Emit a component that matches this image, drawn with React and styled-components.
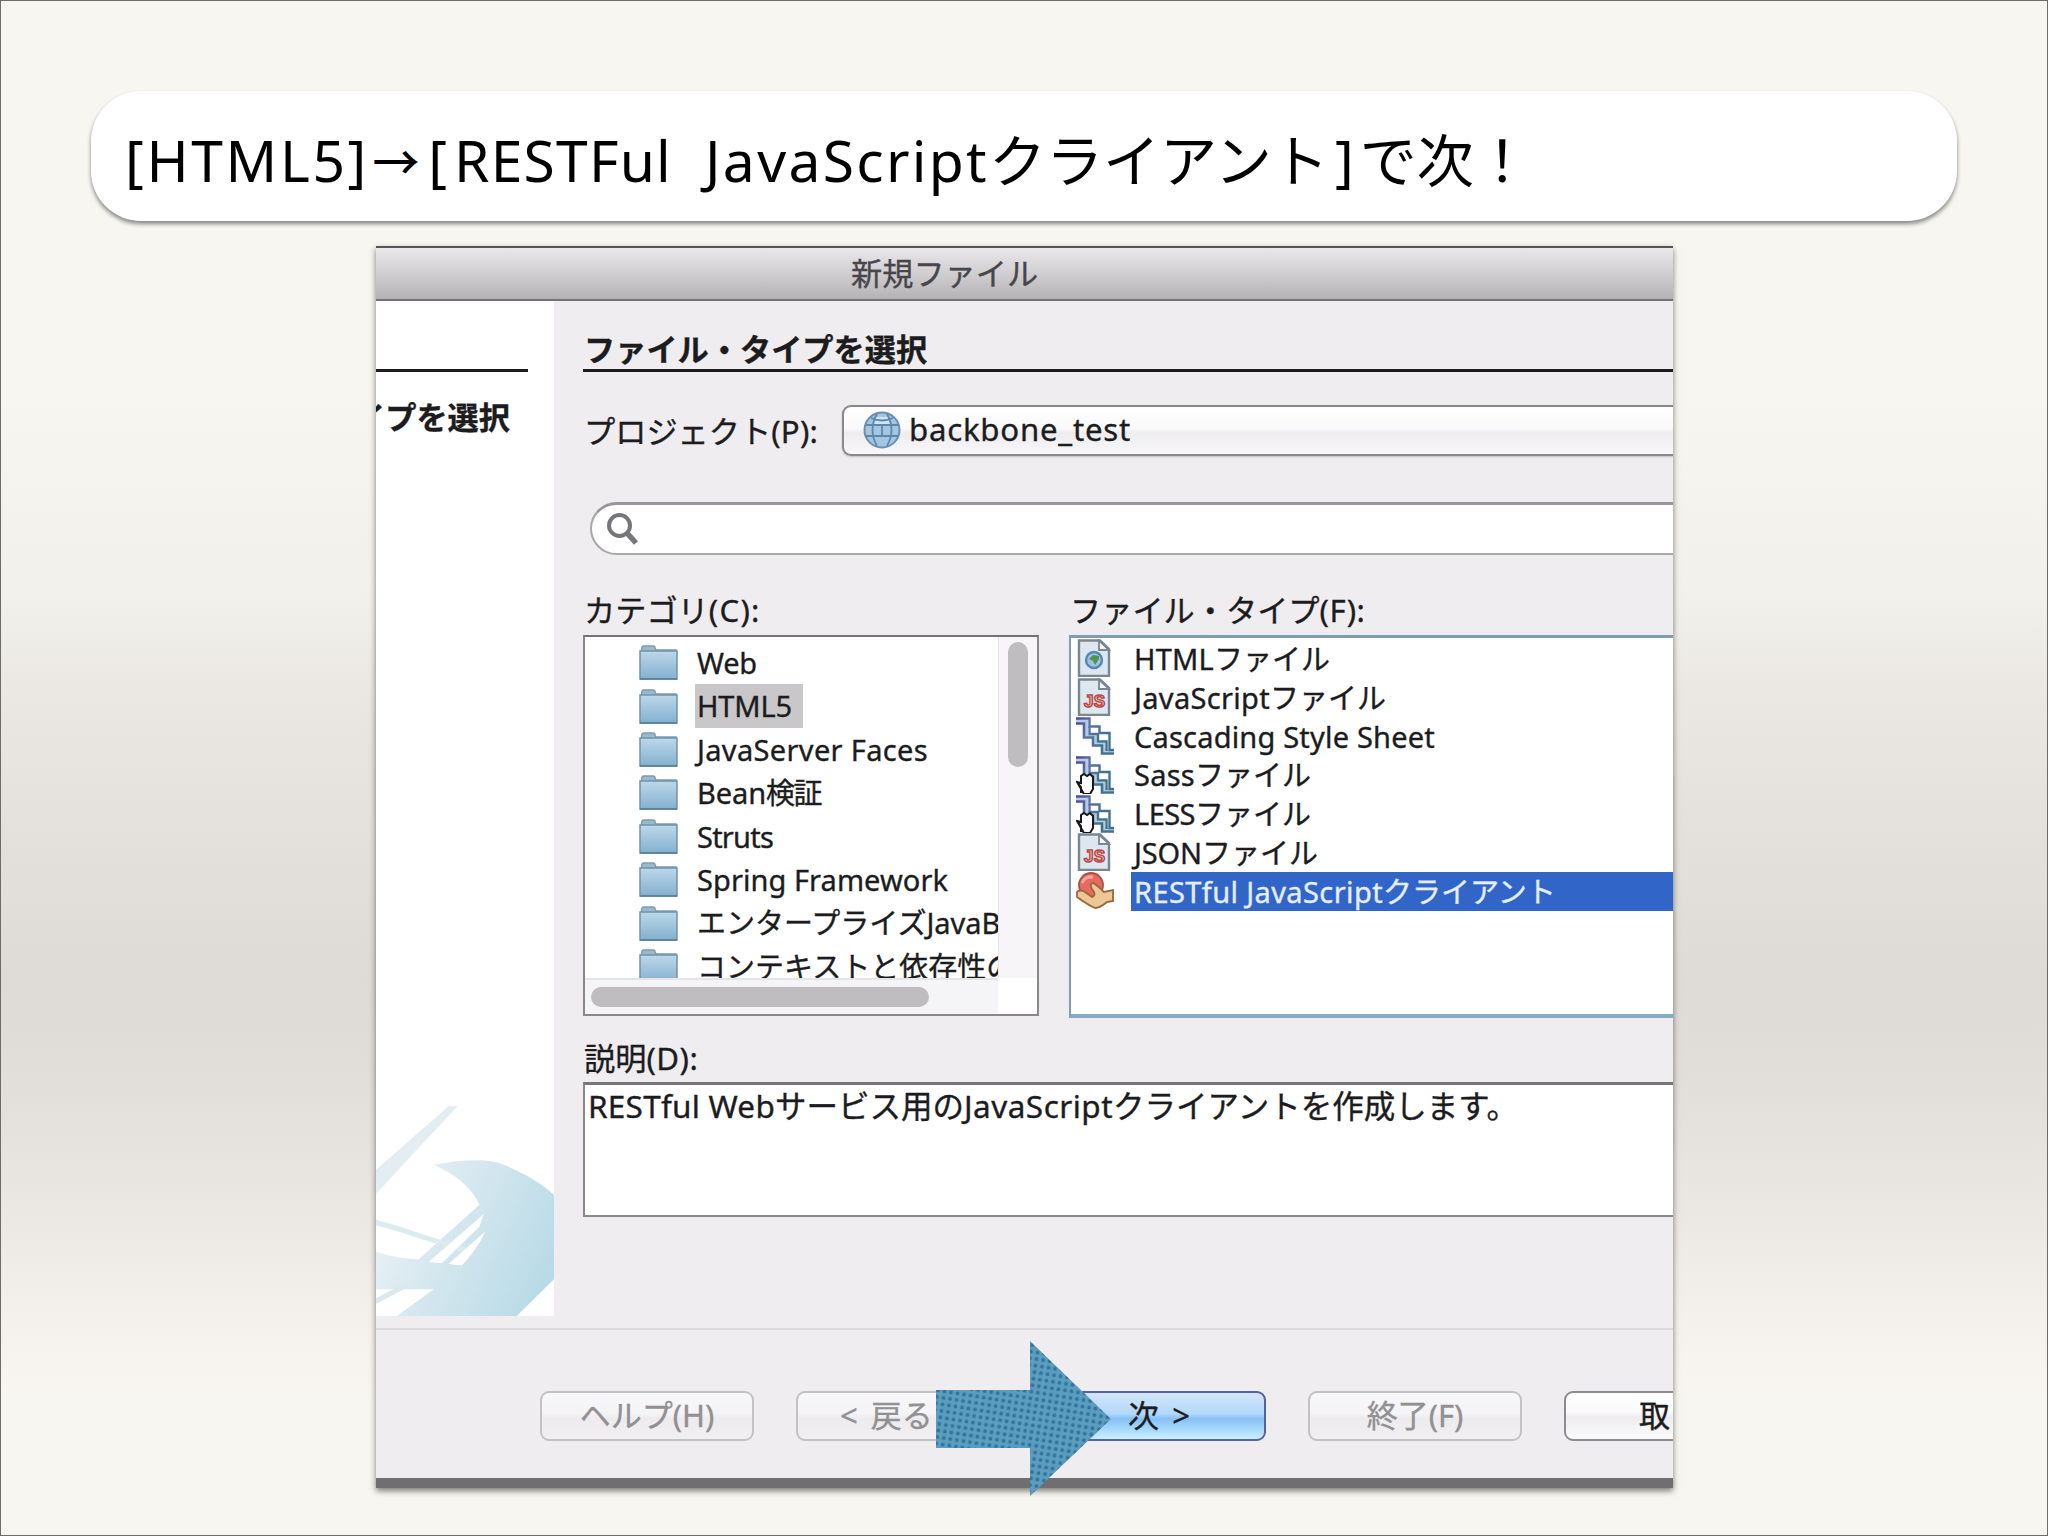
import React, { useLayoutEffect, useRef, useState } from "react"
import styled, { createGlobalStyle } from "styled-components"

const GlobalStyle = createGlobalStyle`
  * {
    box-sizing: border-box;
  }
  body {
    margin: 0px;
    font-family: "Noto Sans", "Noto Sans CJK JP", sans-serif;
    color: #1c1c1e;
  }
`

const Slide = styled.div`
  width: 2048px;
  height: 1536px;
  border: 1px solid #6c6c6a;
  padding: 90px 90px 0px 90px;
  overflow: hidden;
  background: linear-gradient(
    #f7f6f0 0px,
    #f7f6f0 380px,
    #f1f0ea 600px,
    #eae7e2 700px,
    #e2dfda 880px,
    #dedbd6 980px,
    #e1deda 1070px,
    #eae7e3 1200px,
    #f5f2ed 1330px,
    #f8f6f0 1400px,
    #f8f6f0 1536px
  );
`

const TitleCard = styled.h1`
  display: flex;
  align-items: center;
  height: 130px;
  margin: 0px;
  padding: 7px 0px 0px 34px;
  border-radius: 50px;
  background: white;
  color: #000;
  font-size: 57px;
  font-weight: 400;
  line-height: 80px;
  box-shadow: 0px 3px 4px rgba(0, 0, 0, 0.45);
`

const RunText = styled.span`
  display: inline-block;
  white-space: pre;
`

const TitleArrow = styled.span`
  width: 54px;
  font-family: "Noto Sans CJK JP", sans-serif;
  font-size: 47px;
  font-weight: 500;
  text-align: center;
`

const TitleBracket = styled.span`
  width: 31px;
  text-align: right;
  padding-right: ${props => props.$after || 0}px;
`

const Dialog = styled.section`
  display: flex;
  flex-direction: column;
  position: relative;
  width: 1297px;
  height: 1242px;
  margin: 25px 0px 0px 285px;
  border-top: 2px solid #565456;
  border-bottom: 10px solid #706e70;
  background: #efedef;
  font-size: 31.2px;
  line-height: 37px;
  box-shadow: 0px 3px 6px rgba(0, 0, 0, 0.5);
  -webkit-text-stroke: 0.35px currentColor;
`

const TitleBar = styled.header`
  height: 53px;
  padding: 7px 0px 0px 475px;
  border-bottom: 2px solid #737173;
  background: linear-gradient(#e9e7e9, #d0ced0 50%, #b4b2b4);
  color: #48464a;
`

const Body = styled.div`
  display: flex;
  height: 1027px;
`

const Sidebar = styled.aside`
  display: flex;
  flex-direction: column;
  width: 178px;
  height: 1015px;
  background: white;
  overflow: hidden;
`

const StepRule = styled.div`
  width: 152px;
  height: 71px;
  border-bottom: 3px solid #1d1b1d;
`

const Step = styled.div`
  margin: 27px 0px 0px -22px;
  font-weight: 700;
  white-space: nowrap;
`

const Artwork = styled.svg`
  display: block;
  width: 178px;
  height: 213px;
  margin-top: auto;
`

const Main = styled.main`
  flex: 1;
  min-width: 0px;
  padding-left: 29px;
  overflow: hidden;
`

const Heading = styled.h2`
  height: 71px;
  margin: 0px;
  padding: 30px 0px 0px 1px;
  border-bottom: 3px solid #1d1b1d;
  font-size: 31.2px;
  font-weight: 700;
  line-height: 37px;
`

const ProjectRow = styled.div`
  display: flex;
  align-items: center;
  margin-top: 33px;
`

const ProjectLabel = styled.label`
  width: 259px;
  padding: 1px 0px 0px 1px;
  white-space: nowrap;
`

const Dropdown = styled.div`
  display: flex;
  flex: 1;
  align-items: center;
  gap: 8px;
  height: 51px;
  padding: 0px 0px 2px 19px;
  border: 2px solid #8a888b;
  border-right: 0px;
  border-radius: 9px 0px 0px 9px;
  background: linear-gradient(#fff, #fbfafb 45%, #eeecef 55%, #f8f7f8);
  box-shadow: 0px 1px 2px rgba(0, 0, 0, 0.2);
`

const SearchField = styled.div`
  display: flex;
  align-items: center;
  height: 53px;
  margin: 46px 0px 0px 7px;
  padding-left: 13px;
  border: 2px solid #a9a7aa;
  border-top: 3px solid #98969a;
  border-right: 0px;
  border-radius: 27px 0px 0px 27px;
  background: white;
`

const Lists = styled.div`
  display: flex;
  gap: 30px;
  height: 427px;
  margin-top: 37px;
`

const ListColumn = styled.div`
  width: ${props => (props.$wide ? "auto" : "456px")};
  flex: ${props => (props.$wide ? 1 : "none")};
  min-width: 0px;
`

const FieldLabel = styled.div`
  padding-left: 1px;
  margin-bottom: ${props => props.$gap || 6}px;
  white-space: nowrap;
`

const CategoryBox = styled.div`
  display: grid;
  grid-template-columns: 1fr 39px;
  grid-template-rows: 1fr 36px;
  height: 381px;
  border: 2px solid #8a888b;
  border-top-color: #737174;
  background: white;
  font-size: 29px;
`

const CategoryList = styled.div`
  min-width: 0px;
  padding-top: 4px;
  overflow: hidden;
`

const CategoryRow = styled.div`
  display: flex;
  align-items: center;
  height: 43.4px;
  padding-left: 54px;
  gap: 17px;
  white-space: nowrap;
`

const FolderImage = styled.svg`
  flex: none;
  width: 39px;
  height: 35px;
`

const CategoryName = styled.span`
  flex: none;
  height: 43.4px;
  padding: 0px 11px 0px 2px;
  line-height: 43px;
  background: ${props => (props.$selected ? "#c9c7ca" : "transparent")};
`

const VerticalTrack = styled.div`
  padding: 5px 9px;
  border-left: 1px solid #e6e4e7;
  background: #f7f5f8;
`

const HorizontalTrack = styled.div`
  padding: 7px 6px;
  border-top: 2px solid #e6e4e7;
  background: #f5f4f6;
`

const Thumb = styled.div`
  width: ${props => props.$width}px;
  height: ${props => props.$height}px;
  border-radius: 10px;
  background: #bfbdc0;
`

const FileBox = styled.div`
  height: 383px;
  padding-top: 1px;
  border: 2px solid #7f9cb2;
  border-top-width: 3px;
  border-bottom: 4px solid #85abcb;
  border-right: 0px;
  background: white;
  font-size: 29px;
`

const FileRow = styled.div`
  display: flex;
  align-items: center;
  height: 38.8px;
  padding-left: 5px;
  gap: 17px;
  white-space: nowrap;
`

const FileName = styled.span`
  flex: 1;
  height: 38.8px;
  padding-left: 3px;
  line-height: 40px;
  color: ${props => (props.$selected ? "#e6edfb" : "inherit")};
  background: ${props => (props.$selected ? "#3166c8" : "transparent")};
`

const Description = styled.div`
  margin-top: 21px;
`

const DescriptionBox = styled.div`
  height: 135px;
  padding: 2px 0px 0px 3px;
  border: 2px solid #8a888b;
  border-top: 3px solid #777578;
  border-right: 0px;
  background: white;
  font-size: 31.5px;
  white-space: nowrap;
`

const Footer = styled.footer`
  display: flex;
  flex: 1;
  gap: 42px;
  padding: 61px 0px 0px 164px;
  border-top: 2px solid #dcdadc;
  overflow: hidden;
`

const buttonTones = {
  disabled: ["#c3c1c4", "#919093", "linear-gradient(#f8f7f9, #f4f3f5 45%, #edebee 55%, #f1eff2)"],
  normal: ["#8d8b8f", "#1c1c1e", "linear-gradient(#fff, #fcfbfc 40%, #eeecef 52%, #fbfafb)"],
  primary: ["#5663a0", "#1c1c1e", "linear-gradient(#d3e6fb, #b3d8fb 45%, #86c0f3 56%, #a9dafc 80%, #c9f0fe)"],
}

const Button = styled.button`
  flex: none;
  width: 214px;
  height: 50px;
  padding: 0px 0px 2px ${props => props.$indent || 0}px;
  border: 2px solid ${props => buttonTones[props.$tone][0]};
  border-radius: 9px;
  background: ${props => buttonTones[props.$tone][2]};
  color: ${props => buttonTones[props.$tone][1]};
  font-family: inherit;
  font-size: 31px;
  line-height: 37px;
  text-align: ${props => (props.$indent ? "left" : "center")};
  white-space: pre;
  word-spacing: 5px;
`

const Arrow = styled.svg`
  position: absolute;
  left: 560px;
  top: 1092px;
  width: 176px;
  height: 158px;
`

// Spreads a run of text over a fixed width by adjusting its letter spacing
const Run = ({ w, children }) => {
  const ref = useRef(null)
  const [spacing, setSpacing] = useState(0)
  useLayoutEffect(() => {
    const natural = ref.current.getBoundingClientRect().width
    setSpacing((w - natural) / children.length)
  }, [])
  return (
    <RunText ref={ref} style={{ letterSpacing: spacing }}>
      {children}
    </RunText>
  )
}

const Mixed = ({ parts }) =>
  parts.map((part, index) =>
    Array.isArray(part) ? (
      <Run key={index} w={part[1]}>
        {part[0]}
      </Run>
    ) : (
      <React.Fragment key={index}>{part}</React.Fragment>
    )
  )

const FolderIcon = () => (
  <FolderImage viewBox="0 0 39 35">
    <defs>
      <linearGradient id="folder" x1="0" y1="0" x2="0" y2="1">
        <stop offset="0" stopColor="#bdd8ea" />
        <stop offset="1" stopColor="#83b0cf" />
      </linearGradient>
    </defs>
    <path d="M2 8 L3 2 Q3.500 1 5 1 H14 Q16 1 16 3 L17 5 H37 V12 H2 Z" fill="#9bb9cc" stroke="#7f9caf" strokeWidth="1.500" />
    <rect x="1" y="6" width="37" height="28" fill="url(#folder)" stroke="#6f94ac" strokeWidth="1.500" />
    <path d="M1 34 H38" stroke="#567b93" strokeWidth="1.500" />
  </FolderImage>
)

const GlobeIcon = () => (
  <svg width="38" height="38" viewBox="0 0 38 38">
    <circle cx="19" cy="19" r="17.500" fill="#a3c6e2" stroke="#6b8fae" strokeWidth="2" />
    <path d="M12 6 H26 L28 15 H10 Z" fill="#cfe4f4" />
    <g fill="none" stroke="#5f87a9" strokeWidth="1.800">
      <path d="M14 3 Q5 19 14 35 M24 3 Q33 19 24 35" />
      <path d="M3 14 H35 M3 25 H35 M19 14 V25 M8 7 Q19 12 30 7" />
    </g>
  </svg>
)

const SearchIcon = () => (
  <svg width="38" height="36" viewBox="0 0 38 36">
    <circle cx="14.500" cy="14.500" r="10.500" fill="none" stroke="#77757a" strokeWidth="4" />
    <path d="M22 22 L31 32" stroke="#77757a" strokeWidth="5.500" />
  </svg>
)

const Page = () => (
  <>
    <path d="M3 1.500 H24 L33 10 V37 H3 Z" fill="#dce7ef" stroke="#7b8790" strokeWidth="2.400" />
    <path d="M23 1.500 V11 H33 Z" fill="#f8fafc" stroke="#7b8790" strokeWidth="1.800" />
  </>
)

const Stairs = () => (
  <>
    <defs>
      <linearGradient id="stairs" gradientUnits="userSpaceOnUse" x1="0" y1="0" x2="30" y2="10">
        <stop offset="0" stopColor="#4c3f95" />
        <stop offset="0.500" stopColor="#5f74a6" />
        <stop offset="1" stopColor="#43718c" />
      </linearGradient>
    </defs>
    <g fill="none">
      <path d="M0 4 H10.500 V19.500 H19.500 V27.500 H27.500 V34 H38" stroke="#b4cde2" strokeWidth="3" />
      <path d="M0 1.500 H13.500 V9.500 H23.500 V16 H33.500 V33 H38" stroke="url(#stairs)" strokeWidth="2.400" />
      <path d="M0 6.500 H8 V20.500 H17 V28.500 H26 V36.500 H38" stroke="url(#stairs)" strokeWidth="2.600" />
      <path d="M13.500 9.500 V17 H22 V24.500 H30.500 V34" stroke="url(#stairs)" strokeWidth="2.400" />
    </g>
  </>
)

const fileIcons = {
  html: (
    <>
      <Page />
      <circle cx="18" cy="21" r="8" fill="#9fc2e2" stroke="#5588b5" strokeWidth="2.400" />
      <path d="M13 20 L17 16 L23 17 L23 20 L19 26 L17 22 Z" fill="#4f9448" />
    </>
  ),
  js: (
    <>
      <Page />
      <text
        x="8"
        y="29"
        fontFamily="Liberation Sans"
        fontWeight="700"
        fontSize="17"
        textLength="21"
        fill="#f3e3e2"
        stroke="#bb4745"
        strokeWidth="1.500"
      >
        JS
      </text>
    </>
  ),
  css: <Stairs />,
  pre: (
    <>
      <Stairs />
      <path
        d="M5 37 V31 L1 26 M1 26 L5 27 V20 L8 18 L11 20 L14 18 L17 21 V33 L14 38 H8 Z"
        fill="white"
        stroke="#17181c"
        strokeWidth="2"
      />
    </>
  ),
  rest: (
    <>
      <circle cx="15" cy="13" r="12" fill="#e9695f" stroke="#a95146" strokeWidth="1.800" />
      <path d="M6 11 Q9 4 17 5" stroke="#f7a79d" strokeWidth="3" fill="none" />
      <path
        d="M1 20 Q4 17 9 20 L16 25 Q21 23 16 17 Q13 12 17 11 Q21 13 28 20 L37 18 V29 L31 30 Q24 36 19 36 Q12 33 1 25 Z"
        fill="#edc794"
        stroke="#93693e"
        strokeWidth="1.800"
      />
    </>
  ),
}

const categories = [
  { parts: [["Web", 60]] },
  { parts: [["HTML5", 95]], selected: true },
  { parts: [["JavaServer Faces", 231]] },
  { parts: [["Bean", 69], ["検証", 55]] },
  { parts: [["Struts", 76]] },
  { parts: [["Spring Framework", 251]] },
  { parts: ["エンタープライズ", ["JavaB", 74]] },
  { parts: ["コンテキストと依存性の"] },
]

const files = [
  { icon: "html", parts: [["HTML", 80], "ファイル"] },
  { icon: "js", parts: [["JavaScript", 136], "ファイル"] },
  { icon: "css", parts: [["Cascading Style Sheet", 301]] },
  { icon: "pre", parts: [["Sass", 61], "ファイル"] },
  { icon: "pre", parts: [["LESS", 61], "ファイル"] },
  { icon: "js", parts: [["JSON", 68], "ファイル"] },
  { icon: "rest", parts: [["RESTful JavaScript", 249], "クライアント"], selected: true },
]

const SidebarArt = () => (
  <Artwork viewBox="17 70 535 638" preserveAspectRatio="none">
    <defs>
      <linearGradient id="swirl" x1="0" y1="0.200" x2="1" y2="0.600">
        <stop offset="0" stopColor="#edf3f6" />
        <stop offset="0.500" stopColor="#d3e6ee" />
        <stop offset="1" stopColor="#b9dbe7" />
      </linearGradient>
    </defs>
    <path d="M17 270 L235 80 H262 L17 342 Z" fill="#e3edf2" />
    <path
      d="M190 255 C260 242 350 232 400 255 C450 275 510 305 552 345 V598 L440 708 H80 L190 628 H17 V515 C60 530 100 537 145 538 L328 375 C310 330 260 285 190 255 Z"
      fill="url(#swirl)"
    />
    <path d="M17 420 C110 445 200 480 310 510 L300 522 C200 495 110 460 17 436 Z" fill="#dcebee" />
    <path d="M175 546 L340 403 L328 440 L215 550 Z" fill="white" />
    <path d="M235 552 L345 455 C325 500 300 530 275 557 Z" fill="white" />
    <path d="M17 672 L112 622 H80 L17 655 Z" fill="#dbe9ef" />
  </Artwork>
)

const PointerArrow = () => (
  <Arrow viewBox="0 0 176 158">
    <defs>
      <pattern id="weave" width="6.600" height="6.600" patternUnits="userSpaceOnUse" patternTransform="rotate(9)">
        <rect width="6.600" height="6.600" fill="#5b9cbf" />
        <rect x="1.500" y="1.500" width="3.500" height="3.500" rx="1" fill="#2f749b" />
      </pattern>
    </defs>
    <path d="M0 50 H94 V1 L175 79 L94 156 V108 H0 Z" fill="url(#weave)" />
  </Arrow>
)

const App = () => (
  <>
    <GlobalStyle />
    <Slide>
      <TitleCard>
        <Run w={244}>[HTML5]</Run>
        <TitleArrow>→</TitleArrow>
        <TitleBracket $after={7}>[</TitleBracket>
        <Run w={218}>RESTFul</Run>
        <Run w={33}> </Run>
        <Run w={284}>JavaScript</Run>
        クライアント
        <TitleBracket $after={6}>]</TitleBracket>
        で次！
      </TitleCard>
      <Dialog>
        <TitleBar>新規ファイル</TitleBar>
        <Body>
          <Sidebar>
            <StepRule />
            <Step>イプを選択</Step>
            <SidebarArt />
          </Sidebar>
          <Main>
            <Heading>ファイル・タイプを選択</Heading>
            <ProjectRow>
              <ProjectLabel>
                プロジェクト<Run w={47}>(P):</Run>
              </ProjectLabel>
              <Dropdown>
                <GlobeIcon />
                <Run w={222}>backbone_test</Run>
              </Dropdown>
            </ProjectRow>
            <SearchField>
              <SearchIcon />
            </SearchField>
            <Lists>
              <ListColumn>
                <FieldLabel>
                  カテゴリ<Run w={52}>(C):</Run>
                </FieldLabel>
                <CategoryBox>
                  <CategoryList>
                    {categories.map((category, index) => (
                      <CategoryRow key={index}>
                        <FolderIcon />
                        <CategoryName $selected={category.selected}>
                          <Mixed parts={category.parts} />
                        </CategoryName>
                      </CategoryRow>
                    ))}
                  </CategoryList>
                  <VerticalTrack>
                    <Thumb $width={20} $height={125} />
                  </VerticalTrack>
                  <HorizontalTrack>
                    <Thumb $width={338} $height={20} />
                  </HorizontalTrack>
                </CategoryBox>
              </ListColumn>
              <ListColumn $wide>
                <FieldLabel>
                  ファイル・タイプ<Run w={46}>(F):</Run>
                </FieldLabel>
                <FileBox>
                  {files.map((file, index) => (
                    <FileRow key={index}>
                      <svg width="38" height="38" viewBox="0 0 38 38">
                        {fileIcons[file.icon]}
                      </svg>
                      <FileName $selected={file.selected}>
                        <Mixed parts={file.parts} />
                      </FileName>
                    </FileRow>
                  ))}
                </FileBox>
              </ListColumn>
            </Lists>
            <Description>
              <FieldLabel $gap={5}>
                説明<Run w={52}>(D):</Run>
              </FieldLabel>
              <DescriptionBox>
                <Run w={187}>RESTful Web</Run>
                サービス用の
                <Run w={149}>JavaScript</Run>
                クライアントを作成します。
              </DescriptionBox>
            </Description>
          </Main>
        </Body>
        <Footer>
          <Button $tone="disabled">ヘルプ(H)</Button>
          <Button $tone="disabled" $indent={42}>
            {"< 戻る"}
          </Button>
          <Button $tone="primary">{"次 >"}</Button>
          <Button $tone="disabled">終了(F)</Button>
          <Button $tone="normal" $indent={73}>
            取
          </Button>
        </Footer>
        <PointerArrow />
      </Dialog>
    </Slide>
  </>
)

export default App
